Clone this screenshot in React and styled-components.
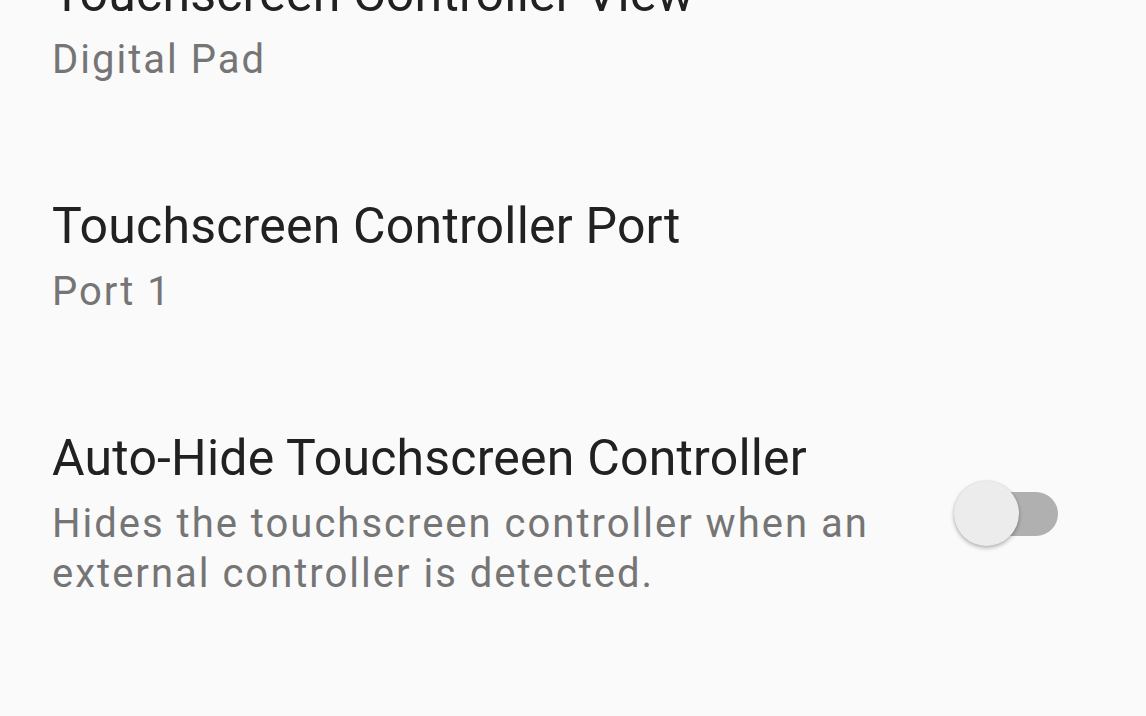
import styled, { createGlobalStyle } from "styled-components";

const GlobalStyle = createGlobalStyle`
  html, body {
    margin: 0;
    padding: 0;
    background: #fafafa;
    overflow: hidden;
  }
  body {
    font-family: Roboto, "Noto Sans", sans-serif;
  }
`;

const Screen = styled.div`
  width: 1146px;
  height: 716px;
  overflow: hidden;
  background: #fafafa;
`;

// list is scrolled, the first preference is partly above the top edge
const List = styled.div`
  display: flex;
  flex-direction: column;
  margin-top: -91px;
`;

const Item = styled.div`
  display: flex;
  align-items: center;
  gap: 40px;
  padding: 55px 88px 56px 52px;
`;

const Texts = styled.div`
  flex: 1;
  display: flex;
  flex-direction: column;
  gap: 11px;
  min-width: 0;
`;

const Title = styled.div`
  font-size: 50px;
  line-height: 60px;
  letter-spacing: 0.2px;
  color: #212121;
  white-space: nowrap;
`;

const Summary = styled.div`
  font-size: 40px;
  line-height: 50px;
  letter-spacing: 2px;
  color: #757575;
`;

const Switch = styled.div`
  position: relative;
  flex: none;
  width: 104px;
  height: 65px;
`;

const Track = styled.div`
  position: absolute;
  left: 4px;
  right: 0;
  top: 11px;
  height: 44px;
  border-radius: 22px;
  background: #b0b0b0;
`;

const Thumb = styled.div`
  position: absolute;
  left: 0;
  top: 0;
  width: 65px;
  height: 65px;
  border-radius: 50%;
  background: #ececec;
  box-shadow: 0 2px 4px rgba(0, 0, 0, 0.28), 0 0 2px rgba(0, 0, 0, 0.12);
`;

const items = [
  { title: "Touchscreen Controller View", summary: "Digital Pad" },
  { title: "Touchscreen Controller Port", summary: "Port 1" },
  {
    title: "Auto-Hide Touchscreen Controller",
    summary: "Hides the touchscreen controller when an external controller is detected.",
    toggle: true,
  },
];

export default function App() {
  return (
    <Screen>
      <GlobalStyle />
      <List>
        {items.map((it) => (
          <Item key={it.title}>
            <Texts>
              <Title>{it.title}</Title>
              <Summary>{it.summary}</Summary>
            </Texts>
            {it.toggle && (
              <Switch>
                <Track />
                <Thumb />
              </Switch>
            )}
          </Item>
        ))}
      </List>
    </Screen>
  );
}
